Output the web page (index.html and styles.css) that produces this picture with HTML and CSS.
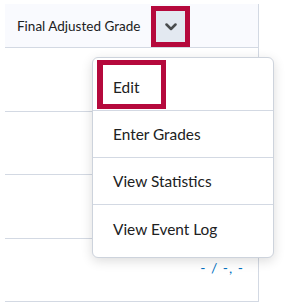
FILE: index.html
```html
<!DOCTYPE html>
<html lang="en">
<head>
  <meta charset="UTF-8" />
  <title>Grade menu</title>
  <link rel="stylesheet" href="styles.css">
</head>
<body>
  <div class="grid">
    <div class="head">
      <span class="head-title">Final Adjusted Grade</span>
      <button class="drop-btn" aria-label="Actions">
        <svg width="12" height="8" viewBox="0 0 12 8"><path d="M1.5 1.5 L6 6 L10.5 1.5" fill="none" stroke="#494c4e" stroke-width="2.5" stroke-linecap="round" stroke-linejoin="round"/></svg>
      </button>
    </div>
    <div class="row"></div>
    <div class="row"></div>
    <div class="row"></div>
    <div class="row last"><span class="score">- / -, -</span></div>
  </div>

  <div class="menu">
    <div class="menu-item">Edit</div>
    <div class="menu-item">Enter Grades</div>
    <div class="menu-item">View Statistics</div>
    <div class="menu-item end">View Event Log</div>
    <span class="mark"></span>
  </div>
</body>
</html>
```
FILE: styles.css
```css
* { box-sizing: border-box; margin: 0; padding: 0; }
body {
  font-family: Lato, "Noto Sans", sans-serif;
  background: #fff;
  color: #202122;
  width: 286px;
  height: 307px;
  overflow: hidden;
  position: relative;
}
.grid {
  margin: 4px 0 0 5px;
  width: 254px;
  border-right: 1px solid #d3d9e3;
}
.head {
  height: 44px;
  background: #f9fafe;
  border-bottom: 1px solid #d3d9e3;
  display: flex;
  align-items: center;
  padding-left: 12px;
}
.head-title {
  font-size: 13.5px;
  color: #202122;
}
.drop-btn {
  margin-left: 16px;
  margin-top: 2px;
  width: 29px;
  height: 31px;
  background: #e3e9f1;
  border: none;
  outline: 5px solid #b5093c;
  display: flex;
  align-items: center;
  justify-content: center;
}
.row {
  height: 63.5px;
  border-bottom: 1px solid #d3d9e3;
}
.row.last {
  display: flex;
  justify-content: flex-end;
  padding: 20px 14px 0 0;
}
.score {
  color: #006fbf;
  font-size: 14px;
  letter-spacing: 1px;
}
.menu {
  position: absolute;
  left: 92px;
  top: 57px;
  width: 182px;
  height: 201px;
  background: #fff;
  border: 1px solid #cdd3dc;
  border-radius: 6px;
  box-shadow: 0 3px 12px rgba(0,0,0,0.14);
  padding: 6px 0;
}
.menu-item {
  height: 47px;
  display: flex;
  align-items: center;
  padding-left: 20px;
  font-size: 15.4px;
  border-bottom: 1px solid #d3d9e3;
}
.menu-item.end { border-bottom: none; }
.mark {
  position: absolute;
  left: 4px;
  top: 2px;
  width: 69px;
  height: 49px;
  border: 5px solid #b5093c;
  border-left-width: 6px;
}
```
